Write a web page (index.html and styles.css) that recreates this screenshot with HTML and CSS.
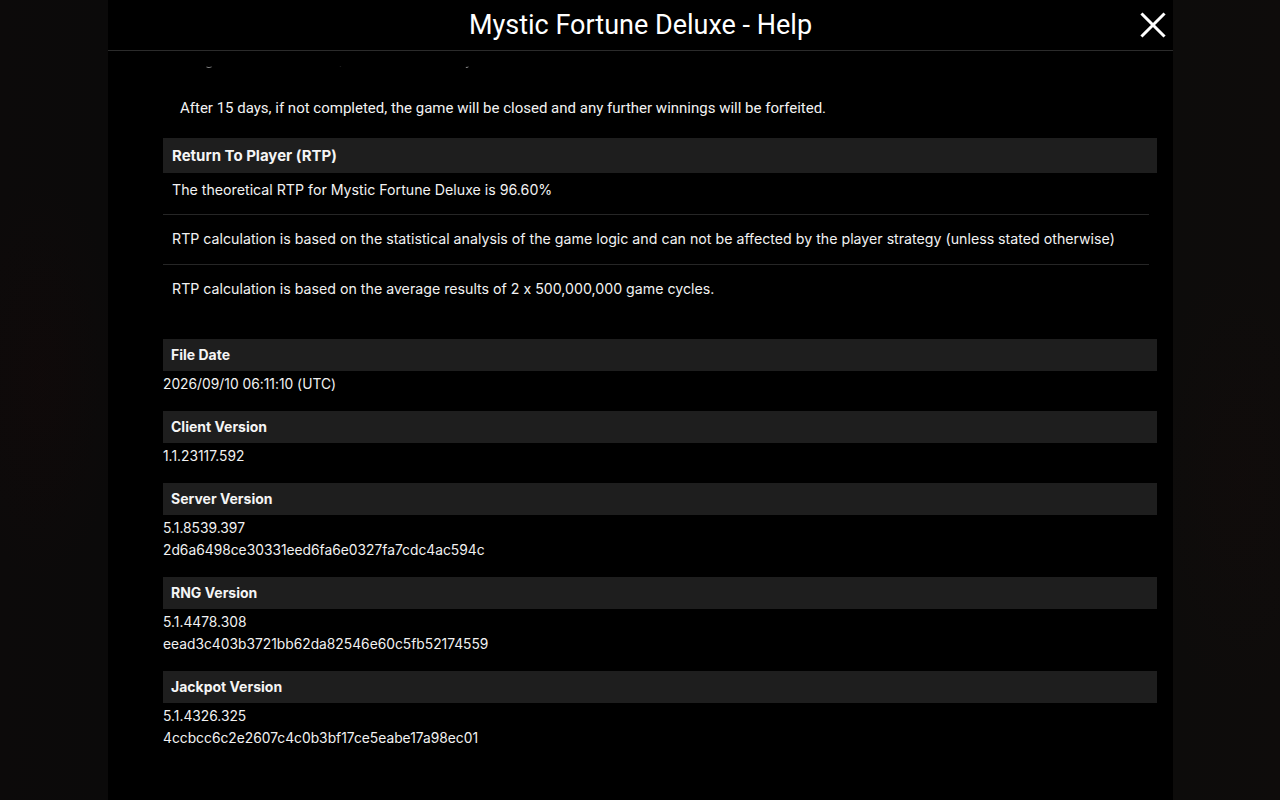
FILE: index.html
```html
<!DOCTYPE html>
<html lang="en">
<head>
<meta charset="utf-8">
<title>Mystic Fortune Deluxe - Help</title>
<link rel="stylesheet" href="styles.css">
</head>
<body>
<div class="panel">
  <header class="header">
    <div></div>
    <h1 class="title">Mystic Fortune Deluxe - Help</h1>
    <button class="close" aria-label="Close">
      <svg width="26" height="26" viewBox="0 0 26 26"><path d="M2.5 2.5 L23.5 23.5 M23.5 2.5 L2.5 23.5" stroke="#fff" stroke-width="3" stroke-linecap="square" fill="none"/></svg>
    </button>
  </header>
  <main class="content">
    <p class="para clipped">If a game is not finished, it is held for 15 days and then it will be closed.</p>
    <p class="para">After 15 days, if not completed, the game will be closed and any further winnings will be forfeited.</p>

    <section class="rtp">
      <div class="bar bar-lg">Return To Player (RTP)</div>
      <div class="row first">The theoretical RTP for Mystic Fortune Deluxe is 96.60%</div>
      <div class="row">RTP calculation is based on the statistical analysis of the game logic and can not be affected by the player strategy (unless stated otherwise)</div>
      <div class="row last">RTP calculation is based on the average results of 2 x 500,000,000 game cycles.</div>
    </section>

    <section class="info">
      <div class="bar">File Date</div>
      <div class="vals"><div>2026/09/10 06:11:10 (UTC)</div></div>
    </section>
    <section class="info">
      <div class="bar">Client Version</div>
      <div class="vals"><div>1.1.23117.592</div></div>
    </section>
    <section class="info">
      <div class="bar">Server Version</div>
      <div class="vals"><div>5.1.8539.397</div><div>2d6a6498ce30331eed6fa6e0327fa7cdc4ac594c</div></div>
    </section>
    <section class="info">
      <div class="bar">RNG Version</div>
      <div class="vals"><div>5.1.4478.308</div><div>eead3c403b3721bb62da82546e60c5fb52174559</div></div>
    </section>
    <section class="info">
      <div class="bar">Jackpot Version</div>
      <div class="vals"><div>5.1.4326.325</div><div>4ccbcc6c2e2607c4c0b3bf17ce5eabe17a98ec01</div></div>
    </section>
  </main>
</div>
</body>
</html>
```
FILE: styles.css
```css
html, body {
  margin: 0;
  padding: 0;
  height: 100%;
}
body {
  background:
    radial-gradient(ellipse 80px 200px at 40px 380px, rgba(30, 8, 8, 0.2), transparent),
    radial-gradient(ellipse 90px 220px at 1240px 480px, rgba(28, 10, 10, 0.18), transparent),
    linear-gradient(90deg, #0c0a0a 0%, #0b0a0a 8%, #0a0909 50%, #0d0c0b 92%, #0e0c0b 100%);
  color: #fff;
  font-family: Inter, "Noto Sans", sans-serif;
  font-feature-settings: "calt" 0;
  overflow: hidden;
}
.panel {
  width: 1065px;
  height: 800px;
  margin-left: 108px;
  background: #000;
  display: flex;
  flex-direction: column;
}
.header {
  height: 50px;
  border-bottom: 1px solid #2b2b2b;
  display: grid;
  grid-template-columns: 1fr auto 1fr;
  align-items: center;
  flex: none;
}
.title {
  margin: 0;
  font-family: Roboto, "Liberation Sans", sans-serif;
  font-weight: 400;
  font-size: 27px;
  line-height: 50px;
  color: #fff;
}
.close {
  justify-self: end;
  margin-right: 7px;
  width: 26px;
  height: 26px;
  padding: 0;
  border: 0;
  background: none;
  display: flex;
  align-items: center;
  justify-content: center;
  cursor: pointer;
}
.content {
  flex: 1;
  overflow: hidden;
  padding: 0 16px 0 55px;
}
.para {
  margin: 0;
  padding-left: 17px;
  font-family: Roboto, "Liberation Sans", sans-serif;
  font-size: 15px;
  line-height: 22px;
  color: #f2f2f2;
}
.clipped {
  margin-top: -2px;
  white-space: nowrap;
  overflow: hidden;
  -webkit-mask-image: linear-gradient(to bottom, transparent 0, transparent 17px, rgba(0,0,0,0.7) 19px, #000 22px);
  mask-image: linear-gradient(to bottom, transparent 0, transparent 17px, rgba(0,0,0,0.7) 19px, #000 22px);
}
.para + .para {
  margin-top: 26px;
}
.rtp {
  margin-top: 19px;
}
.bar {
  background: #1e1e1e;
  height: 32px;
  line-height: 32px;
  padding: 0 8px;
  font-weight: 700;
  font-size: 14px;
  color: #f5f5f5;
}
.bar-lg {
  height: 35px;
  line-height: 35px;
  padding: 0 9px;
  font-size: 15px;
}
.row {
  margin-right: 8px;
  padding: 13px 9px 14px;
  font-size: 14.2px;
  line-height: 22px;
  border-bottom: 1px solid #262626;
  color: #f2f2f2;
}
.row.first {
  padding-top: 6px;
  padding-bottom: 13px;
}
.row.last {
  border-bottom: 0;
}
.rtp + .info {
  margin-top: 25px;
}
.info {
  margin-bottom: 16px;
}
.vals {
  padding-top: 2px;
  font-size: 13.8px;
  line-height: 22px;
  color: #f2f2f2;
}
```
